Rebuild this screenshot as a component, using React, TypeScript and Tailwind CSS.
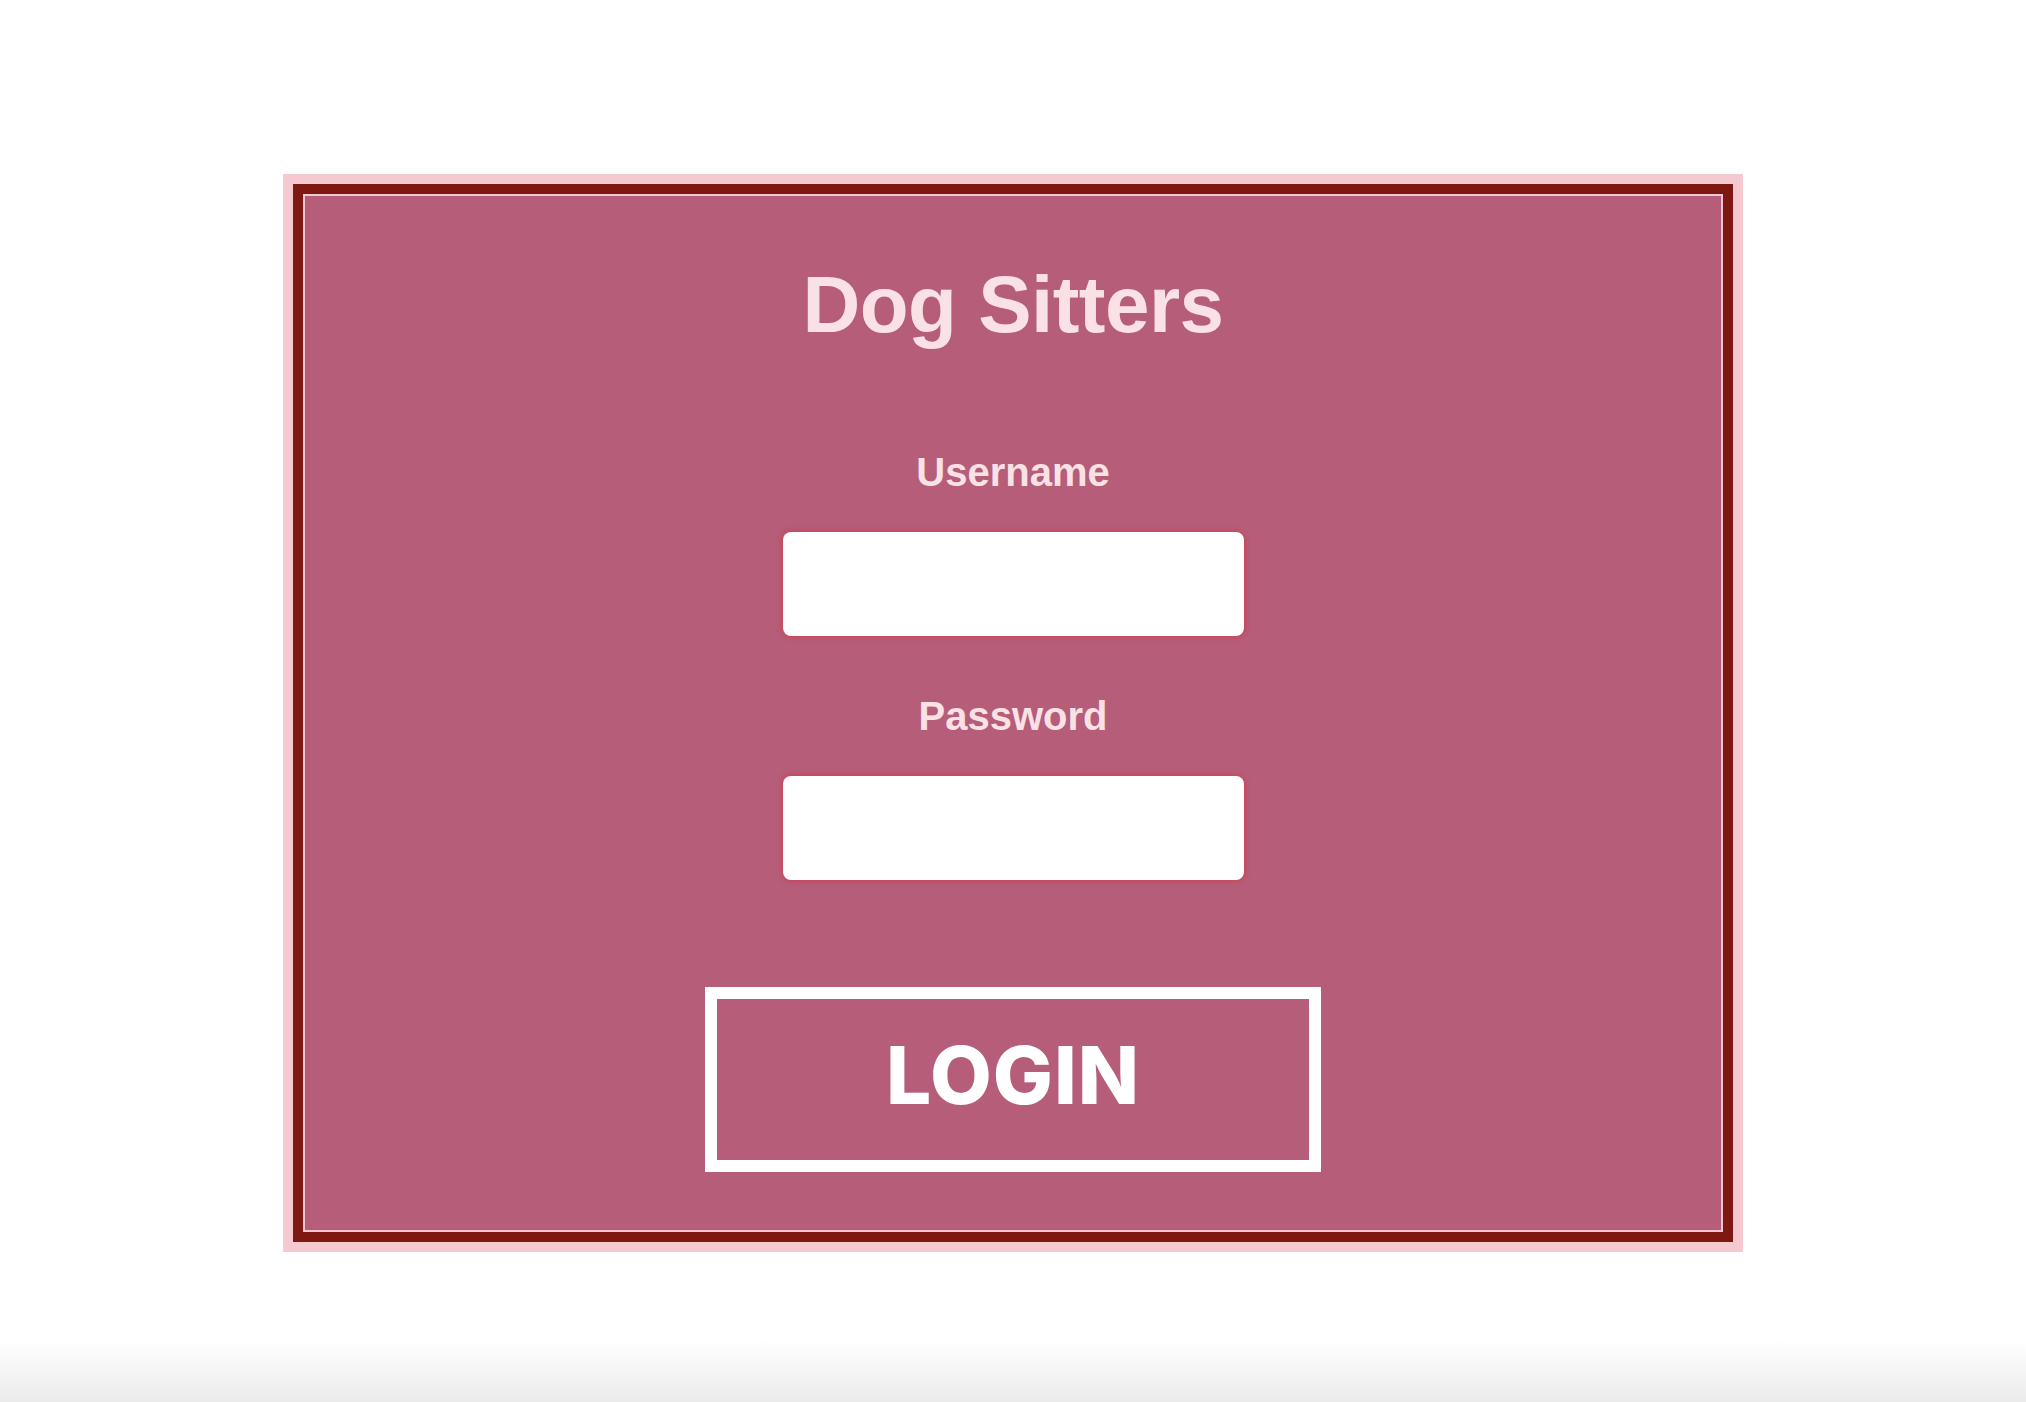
import { useState } from "react";

// Login card for the dog sitting app
const Field = ({ label, type }: { label: string; type: string }) => {
  const [value, setValue] = useState("");

  return (
    <div className="flex flex-col items-center">
      <label className="text-[40px] font-bold leading-none text-[#f9e1e5]">{label}</label>
      <input
        type={type}
        value={value}
        onChange={(e) => setValue(e.target.value)}
        className="mt-[40px] h-[104px] w-[461px] rounded-[8px] border-0 bg-white px-4 text-[28px] text-gray-800 outline-none shadow-[0_0_5px_1px_rgba(214,52,68,0.75)]"
      />
    </div>
  );
};

export default function App() {
  return (
    <div
      className="flex min-h-screen flex-col bg-white"
      style={{ fontFamily: '"Liberation Sans", Arial, Helvetica, sans-serif' }}
    >
      <div className="pt-[174px]">
        <div className="mx-auto w-[1460px] border-[10px] border-[#f6c9d1]">
          <div className="border-[10px] border-[#7e1912]">
            <div className="flex h-[1038px] flex-col items-center border-2 border-[#f3c7d0] bg-[#b65d79] pt-[69px]">
              <h1 className="text-[80px] font-bold leading-none tracking-[-0.5px] text-[#f9e1e5]">
                Dog Sitters
              </h1>

              <form
                className="mt-[107px] flex flex-col items-center"
                onSubmit={(e) => e.preventDefault()}
              >
                <Field label="Username" type="text" />
                <div className="mt-[60px]">
                  <Field label="Password" type="password" />
                </div>

                <button
                  type="submit"
                  className="mt-[107px] flex h-[185px] w-[616px] items-center justify-center border-[12px] border-white bg-transparent pb-[10px] text-[80px] font-extrabold leading-none tracking-[1px] text-white"
                  style={{ fontFamily: 'Inter, "Liberation Sans", sans-serif' }}
                >
                  LOGIN
                </button>
              </form>
            </div>
          </div>
        </div>
      </div>

      <div className="flex-1" />
      {/* soft shade along the bottom edge */}
      <div className="h-[62px] bg-gradient-to-b from-white to-[#ebebeb]" />
    </div>
  );
}
